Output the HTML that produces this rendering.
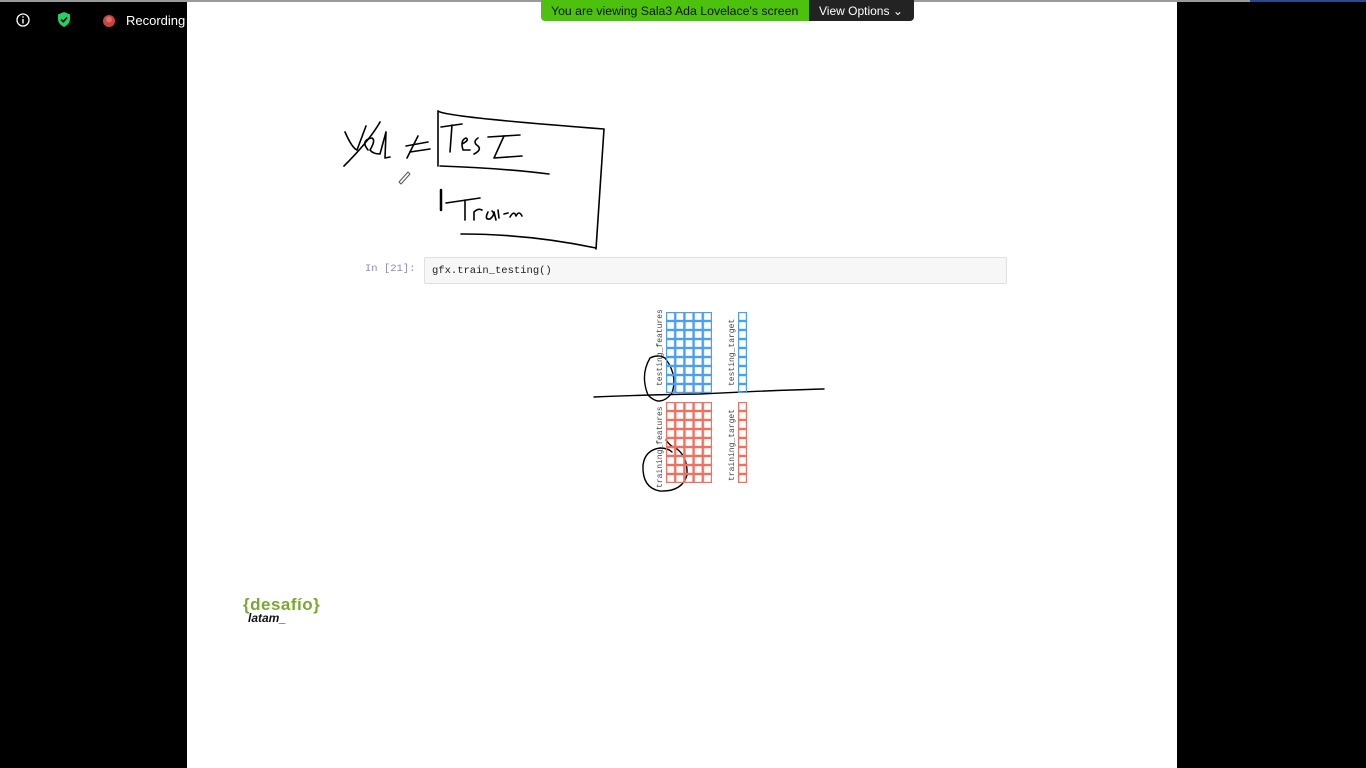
<!DOCTYPE html>
<html><head><meta charset="utf-8"><style>
html,body{margin:0;padding:0;width:1366px;height:768px;overflow:hidden;background:#000;font-family:"Liberation Sans",sans-serif}
.page{position:absolute;left:187px;top:2px;width:990px;height:766px;background:#fff}
.topline{position:absolute;left:0;top:0;width:1366px;height:2px;background:#9a9a9a}
.tl{position:absolute;top:11px;color:#fff;font-size:13px}
.banner{position:absolute;left:541px;top:0;height:21px;display:flex;border-radius:0 0 4px 4px;overflow:hidden}
.banner .g{background:#4cc20e;color:#111;width:268px;box-sizing:border-box;padding:4px 0 0 10px;font-size:12.3px;white-space:nowrap}
.banner .d{background:#232323;color:#fff;width:105px;box-sizing:border-box;padding:4px 0 0 10px;font-size:12px;white-space:nowrap}
.cell{position:absolute;left:424px;top:257px;width:583px;height:27px;background:#f7f7f7;border:1px solid #e0e0e0;border-radius:2px;font-family:"Liberation Mono",monospace;font-size:10.5px;color:#222;line-height:27px;padding-left:7px;box-sizing:border-box}
.prompt{position:absolute;left:365px;top:263px;font-family:"Liberation Mono",monospace;font-size:10.5px;color:#8a8ac0}
.rot{position:absolute;font-family:"Liberation Mono",monospace;font-size:8px;color:#444;transform:rotate(-90deg);transform-origin:left top;white-space:nowrap}
</style></head><body>
<div class="topline"></div>
<div style="position:absolute;left:1250px;top:0;width:116px;height:2px;background:#2a4a8a"></div>
<div class="page"></div>
<svg style="position:absolute;left:15px;top:12px" width="16" height="16"><circle cx="8" cy="8" r="6" fill="none" stroke="#fff" stroke-width="1.3"/><rect x="7.3" y="7" width="1.4" height="4.5" fill="#fff"/><rect x="7.3" y="4.3" width="1.4" height="1.4" fill="#fff"/></svg>
<svg style="position:absolute;left:56px;top:11px" width="16" height="17"><path d="M8 1 L14 3.5 V8 C14 12 11 14.5 8 16 C5 14.5 2 12 2 8 V3.5Z" fill="#23d160"/><path d="M5 8.5 L7.3 10.7 L11 6.5" fill="none" stroke="#000" stroke-width="1.6"/></svg>
<svg style="position:absolute;left:102px;top:14px" width="14" height="14"><circle cx="7" cy="7" r="6" fill="#c8443c"/><circle cx="7" cy="5.5" r="3" fill="#e88a80" opacity=".6"/></svg>
<div class="tl" style="left:126px;top:13px">Recording</div>
<div class="banner"><div class="g">You are viewing Sala3 Ada Lovelace's screen</div><div class="d">View Options &#8964;</div></div>

<svg style="position:absolute;left:0;top:0" width="1366" height="768" fill="none" stroke="#000" stroke-linecap="round" stroke-linejoin="round">
<g stroke-width="1.6">
<path d="M438 111 Q445 117 604 129 L596 249"/>
<path d="M438 111 L438 166"/>
<path d="M440 166 Q500 168 549 174"/>
<path d="M461 234 Q530 234 596 248"/>
<path d="M441 190 L441 210" stroke-width="2.5"/>
<path d="M345 132 Q352 148 357 150 L366 126"/>
<path d="M344 166 Q370 140 380 122"/>
<path d="M368 150 Q360 140 372 138 Q376 140 370 150 Q373 154 380 154 L386 132 L385 158 L390 157"/>
<path d="M418 136 L407 158"/><path d="M406 146 L428 142"/><path d="M410 152 L430 149"/>
<path d="M441 127 L462 124"/><path d="M452 125 L450 152"/>
<path d="M462 144 Q470 140 466 138 Q460 140 463 150 L470 150"/>
<path d="M478 138 Q472 142 478 146 Q482 150 474 154"/>
<path d="M488 137 L520 135"/><path d="M504 136 L494 158 L522 156"/>
<path d="M446 203 L480 198"/><path d="M465 200 L465 220"/>
<path d="M474 220 L474 212 Q478 208 482 210"/>
<path d="M488 212 Q484 220 490 219 Q496 214 492 211 M494 212 L496 220"/>
<path d="M498 210 L499 218"/><path d="M504 214 L508 213"/>
<path d="M510 217 Q514 210 516 216 Q519 210 522 216"/>
<path d="M399 182 L408 172 L410 174 L401 184 Z" stroke-width="1" stroke="#555"/>
</g>
<g stroke-width="1.4">
<path d="M594 397 Q640 395 700 394 Q780 390 824 389"/>
<path d="M650 358 Q640 375 648 395 Q660 408 672 393 Q678 375 665 358 Q658 354 650 358"/>
<path d="M666 440 Q670 446 674 447 Q688 455 687 475 Q682 492 660 491 Q642 488 643 465 Q645 450 660 448 Q668 448 672 452"/>
</g>
</svg>

<div class="prompt">In [21]:</div>
<div class="cell">gfx.train_testing()</div>

<svg style="position:absolute;left:660px;top:305px" width="100" height="190">
<defs>
<pattern id="gb" x="6" y="7" width="9.2" height="9" patternUnits="userSpaceOnUse"><rect x="0.6" y="0.6" width="8" height="7.8" fill="none" stroke="#4a9ff0" stroke-width="1.2"/></pattern>
<pattern id="gr" x="6" y="97" width="9.2" height="9" patternUnits="userSpaceOnUse"><rect x="0.6" y="0.6" width="8" height="7.8" fill="none" stroke="#f07060" stroke-width="1.2"/></pattern>
<pattern id="tb" x="78" y="7" width="9" height="9" patternUnits="userSpaceOnUse"><rect x="0.6" y="0.6" width="7.8" height="7.8" fill="none" stroke="#4a9ff0" stroke-width="1.2"/></pattern>
<pattern id="tr" x="78" y="97" width="9" height="9" patternUnits="userSpaceOnUse"><rect x="0.6" y="0.6" width="7.8" height="7.8" fill="none" stroke="#f07060" stroke-width="1.2"/></pattern>
</defs>
<rect x="6" y="7" width="46" height="81" fill="url(#gb)"/>
<rect x="6" y="97" width="46" height="81" fill="url(#gr)"/>
<rect x="78" y="7" width="9" height="81" fill="url(#tb)"/>
<rect x="78" y="97" width="9" height="81" fill="url(#tr)"/>
</svg>
<div class="rot" style="left:656px;top:386px">testing_features</div>
<div class="rot" style="left:656px;top:488px">training_features</div>
<div class="rot" style="left:728px;top:386px">testing_target</div>
<div class="rot" style="left:728px;top:481px">training_target</div>

<div style="position:absolute;left:243px;top:595px;color:#7aa832;font-size:17px;font-weight:bold;letter-spacing:.5px">{desafío}</div>
<div style="position:absolute;left:248px;top:611px;color:#111;font-size:12px;font-weight:bold;font-style:italic">latam_</div>
</body></html>
